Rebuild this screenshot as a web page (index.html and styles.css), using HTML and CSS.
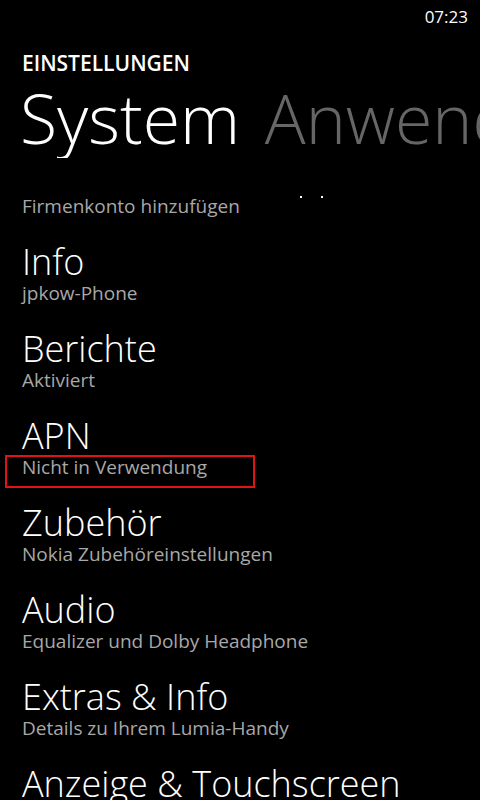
FILE: index.html
```html
<!DOCTYPE html>
<html lang="de">
<head>
    <meta charset="UTF-8">
    <meta name="viewport" content="width=device-width, initial-scale=1.0">
    <title>Einstellungen</title>
    <link rel="stylesheet" href="styles.css">
</head>
<body>
    <div class="status-bar">
        <span class="clock">07:23</span>
    </div>

    <div class="app-title">EINSTELLUNGEN</div>

    <div class="pivot">
        <span class="pivot-item active">System</span>
        <span class="pivot-item">Anwendungen</span>
    </div>

    <div class="settings-list">
        <div class="setting partial">
            <span class="setting-sub">Firmenkonto hinzufügen</span>
            <span class="dots"><i></i><i></i></span>
        </div>
        <div class="setting">
            <div class="setting-title">Info</div>
            <div class="setting-sub">jpkow-Phone</div>
        </div>
        <div class="setting">
            <div class="setting-title">Berichte</div>
            <div class="setting-sub">Aktiviert</div>
        </div>
        <div class="setting">
            <div class="setting-title">APN</div>
            <div class="setting-sub highlight">Nicht in Verwendung</div>
        </div>
        <div class="setting">
            <div class="setting-title">Zubehör</div>
            <div class="setting-sub">Nokia Zubehöreinstellungen</div>
        </div>
        <div class="setting">
            <div class="setting-title">Audio</div>
            <div class="setting-sub">Equalizer und Dolby Headphone</div>
        </div>
        <div class="setting">
            <div class="setting-title">Extras &amp; Info</div>
            <div class="setting-sub">Details zu Ihrem Lumia-Handy</div>
        </div>
        <div class="setting">
            <div class="setting-title">Anzeige &amp; Touchscreen</div>
            <div class="setting-sub">Helligkeit, Farben und Empfindlichkeit</div>
        </div>
    </div>
</body>
</html>
```

FILE: styles.css
```css
* {
    margin: 0;
    padding: 0;
    box-sizing: border-box;
}

body {
    font-family: "Open Sans", "Noto Sans", sans-serif;
    background-color: #000;
    color: #fff;
    width: 480px;
    height: 800px;
    overflow: hidden;
}

.status-bar {
    height: 32px;
    display: flex;
    justify-content: flex-end;
    align-items: center;
    padding-right: 12px;
}

.clock {
    font-size: 17px;
    font-weight: 400;
}

.app-title {
    padding-left: 22px;
    margin-top: 16px;
    font-size: 21px;
    font-weight: 600;
    line-height: 30px;
}

.pivot {
    white-space: nowrap;
    overflow: hidden;
    padding-left: 20px;
    font-size: 68px;
    font-weight: 300;
    line-height: 80px;
}

.pivot-item {
    margin-right: 7px;
    color: #666;
}

.pivot-item.active {
    color: #fff;
}

.settings-list {
    padding-left: 22px;
    margin-top: 27px;
}

.setting {
    height: 87px;
}

.setting.partial {
    height: 57px;
    padding-top: 10px;
    display: flex;
    align-items: flex-start;
    gap: 60px;
}

.setting-title {
    font-size: 36px;
    font-weight: 300;
    line-height: 40px;
}

.setting-sub {
    font-size: 19px;
    color: #a8a8a8;
    line-height: 22px;
}

.setting-sub.highlight {
    position: relative;
}

/* red marker box drawn over the APN status */
.setting-sub.highlight::after {
    content: '';
    position: absolute;
    box-sizing: border-box;
    top: -1px;
    left: -17px;
    width: 250px;
    height: 33px;
    border: 2px solid #e01414;
}

.dots {
    display: flex;
    gap: 19px;
    margin-top: 1px;
}

.dots i {
    display: block;
    width: 2px;
    height: 2px;
    background-color: #fff;
}
```
